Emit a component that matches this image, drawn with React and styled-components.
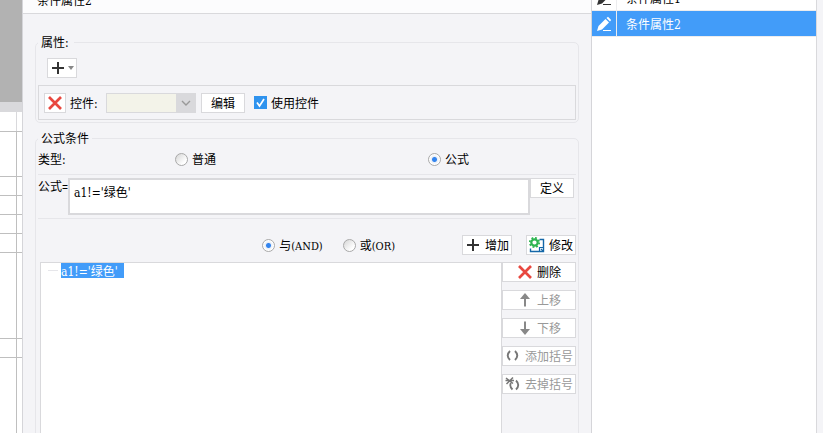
import React, { useState } from 'react'
import styled, { createGlobalStyle } from 'styled-components'

const GlobalStyle = createGlobalStyle`
    * {
        box-sizing: border-box;
    }

    body {
        margin: 0;
        background-color: #f4f4f7;
        color: #000;
    }

    body, button, input, select, textarea {
        font-family: "Noto Sans CJK SC", sans-serif;
        font-size: 12px;
        line-height: 16px;
    }
`;

const Page = styled.div`
    display: flex;
    height: 100vh;
    overflow: hidden;
`;

const Sheet = styled.div`
    display: flex;
    flex-direction: column;
    flex: none;
    width: 22px;
    background-color: #fff;
`;

const SheetTop = styled.div`
    flex: none;
    height: 112px;
    background-color: #b2b2b2;
    border-bottom: 10px solid #d9d9dc;
`;

const SheetRow = styled.div`
    flex: none;
    height: ${props => props.$height}px;
    border-bottom: 1px solid #bfbfbf;
`;

const SheetCell = styled.div`
    width: 17px;
    height: 100%;
    border-right: 1px solid ${props => props.$head ? '#d9d9dc' : '#bfbfbf'};
`;

const Editor = styled.main`
    flex: 1;
    min-width: 0;
    border: 1px solid #d5d5d9;
    border-width: 0 1px;
`;

const EditorTitle = styled.header`
    display: flex;
    align-items: flex-end;
    height: 14px;
    padding: 0 14px 5px;
    overflow: hidden;
    background-color: #fcfcfd;
    border-bottom: 1px solid #d9d9dc;
`;

const EditorBody = styled.div`
    display: flex;
    flex-direction: column;
    gap: 7px;
    padding: 20px 12px 12px;
`;

const Group = styled.fieldset`
    min-width: 0;
    margin: 0;
    padding: 0 2px 2px;
    border: 1px solid #e6e6ea;
    border-radius: 5px;

    legend {
        height: 16px;
        padding: 0 3px;
    }
`;

const Latin = styled.span`
    display: inline-block;
    min-width: 6px;
    font-family: "DejaVu Serif Condensed", "Liberation Serif", serif;
    font-size: ${props => props.$small ? 11 : 12}px;
    line-height: 12px;
`;

/* half-width sign, takes half of a hanzi */
const Sign = styled.span`
    font-family: "Liberation Mono", monospace;
    font-size: 10px;
    line-height: 12px;
`;

const Button = styled.button`
    display: flex;
    flex: none;
    align-items: center;
    justify-content: center;
    gap: 4px;
    width: ${props => props.$width || 44}px;
    height: 20px;
    padding: 0;
    background-color: #fff;
    border: 1px solid #d9d9dc;
    color: #000;
    white-space: nowrap;

    &:disabled {
        color: #999;
    }

    svg {
        flex: none;
    }
`;

const AddRow = styled.div`
    padding: 8px 9px 7px;

    button {
        gap: 2px;
    }
`;

const WidgetRow = styled.div`
    display: flex;
    align-items: center;
    height: 35px;
    padding: 0 5px;
    border: 1px solid #d9d9dc;

    > label {
        margin: 0 6px 0 4px;
    }
`;

const SelectBox = styled.div`
    position: relative;
    width: 90px;
    height: 20px;
    margin-right: 5px;

    select {
        appearance: none;
        width: 100%;
        height: 100%;
        padding: 0 22px 0 4px;
        background-color: #f3f3e9;
        border: 1px solid #d9d9dc;
        border-radius: 0;
    }

    span {
        position: absolute;
        top: 0;
        right: 0;
        display: flex;
        align-items: center;
        justify-content: center;
        width: 20px;
        height: 100%;
        background-color: #d9d9dc;
        pointer-events: none;
    }
`;

const CheckLabel = styled.div`
    display: flex;
    align-items: center;
    gap: 4px;
    margin-left: 9px;

    input {
        appearance: none;
        width: 13px;
        height: 13px;
        margin: 0;
        background-color: #fff;
        border: 1px solid #b4b4b4;
    }

    input:checked {
        border: 0;
        background: #2f93ee url("data:image/svg+xml,%3Csvg xmlns='http://www.w3.org/2000/svg' viewBox='0 0 13 13'%3E%3Cpath d='M3 6.5l2.5 3.5L10 3' fill='none' stroke='white' stroke-width='1.7'/%3E%3C/svg%3E");
    }
`;

const RadioLabel = styled.label`
    display: flex;
    align-items: center;
    gap: 4px;

    input {
        appearance: none;
        width: 13px;
        height: 13px;
        margin: 0;
        border: 1px solid #a9a9a9;
        border-radius: 50%;
        background: linear-gradient(135deg, #d6d6d6, #fff 75%);
    }

    input:checked {
        background: radial-gradient(circle, #3384ee 2px, #e9eef6 3px, #fff 5px);
    }
`;

const TypeRow = styled.div`
    display: grid;
    grid-template-columns: 137fr 253fr 148fr;
    align-items: center;
    height: 29px;
    padding-bottom: 2px;
    border-bottom: 1px solid #e6e6ea;
`;

const FormulaRow = styled.div`
    display: flex;
    align-items: flex-start;
    padding: 3px 2px 3px 0;
    border-bottom: 1px solid #e6e6ea;

    > label {
        flex: none;
        width: 30px;
        white-space: nowrap;
    }

    textarea {
        flex: 1;
        min-width: 0;
        height: 37px;
        padding: 5px 4px;
        border: 2px solid #d9d9dc;
        border-radius: 0;
        font-family: "DejaVu Serif Condensed", "Noto Sans CJK SC", serif;
        resize: none;
    }
`;

const JoinRow = styled.div`
    display: flex;
    align-items: center;
    justify-content: flex-end;
    padding: 16px 0 7px;
`;

const JoinOptions = styled.div`
    display: flex;
    gap: 20px;
    margin-right: 67px;
`;

const JoinButtons = styled.div`
    display: flex;
    gap: 14px;
`;

const Conditions = styled.div`
    display: flex;
    padding-left: 2px;
`;

const Tree = styled.ul`
    flex: 1;
    min-height: 220px;
    margin: 0;
    padding: 0 7px;
    background-color: #fff;
    border: 1px solid #d9d9dc;
    list-style: none;

    li {
        display: flex;
        align-items: center;
        gap: 3px;
    }

    li::before {
        content: "";
        width: 10px;
        border-top: 1px solid #e6e6ea;
    }

    li > span {
        height: 15px;
        padding-right: 3px;
        line-height: 15px;
        background-color: #429cf9;
        color: #fff;
    }
`;

const SideButtons = styled.div`
    display: flex;
    flex-direction: column;
    gap: 8px;
`;

const ItemList = styled.ul`
    flex: none;
    width: 225px;
    margin: 0 6px 0 0;
    padding: 0;
    overflow: hidden;
    background-color: #fff;
    border-right: 1px solid #d9d9dc;
    list-style: none;

    li:first-child {
        margin-top: -15px;
    }
`;

const Item = styled.li`
    display: flex;
    align-items: center;
    height: 26px;
    border-bottom: 1px solid #ececee;
    background-color: ${props => props.$selected ? '#429cf9' : '#fff'};
    color: ${props => props.$selected ? '#fff' : '#333'};

    button {
        display: flex;
        align-items: center;
        justify-content: center;
        width: 25px;
        height: 100%;
        padding: 0;
        background: none;
        border: 0;
        border-right: 1px solid #ececee;
        color: inherit;
    }

    span {
        color: ${props => props.$selected ? '#fff' : '#000'};
    }

    > span {
        padding-left: 9px;
    }
`;

const PlusIcon = () => (
    <svg width="16" height="16" viewBox="0 0 16 16">
        <path d="M2 8h12M8 2v12" stroke="#333" strokeWidth="2" />
    </svg>
)

const CrossIcon = () => (
    <svg width="16" height="16" viewBox="0 0 16 16">
        <path d="M2 2l12 12M14 2L2 14" stroke="#e8473f" strokeWidth="2.7" />
    </svg>
)

const ArrowIcon = ({down}) => (
    <svg width="16" height="16" viewBox="0 0 16 16">
        <g transform={down ? 'rotate(180 8 8)' : undefined} fill="#888">
            <path d="M8 1l5 6H3z" />
            <path d="M7 6h2v8.500H7z" />
        </g>
    </svg>
)

const BracketIcon = ({remove}) => (
    <svg width="16" height="16" viewBox="0 0 16 16" fill="none" stroke="#777">
        {remove ? (
            <>
                <path d="M6 7Q4 10 7.500 13.500M11 4.500Q15.500 9 11 13.500" strokeWidth="1.800" />
                <path d="M1 2l7 5.500M8 1.500l-6.500 6.500M0.500 4.500h8.500" strokeWidth="1.500" />
            </>
        ) : (
            <path d="M5 3Q0.500 7.500 5 12M10 3Q14.500 7.500 10 12" strokeWidth="1.900" />
        )}
    </svg>
)

const ModifyIcon = () => (
    <svg width="16" height="16" viewBox="0 0 16 16" fill="none">
        <path d="M10.500 2.500h4v12h-13v-3" stroke="#1467a8" strokeWidth="1.400" />
        <path d="M10.500 14v-3.500h4M12 12l2 2" stroke="#1467a8" strokeWidth="1.200" />
        <circle cx="5.500" cy="5.500" r="3.200" stroke="#2fb552" strokeWidth="2.200" />
        <circle cx="5.500" cy="5.500" r="4.700" stroke="#2fb552" strokeWidth="1.800" strokeDasharray="1.846" />
    </svg>
)

const PencilIcon = () => (
    <svg width="16" height="16" viewBox="0 0 16 16" fill="currentColor">
        <path d="M1 15L2.500 10L9.500 3l3.500 3.500L6 13.500z" />
        <path d="M10.500 2L12 0.800L15.200 4L14 5.500z" />
        <path d="M7 14h8v1H7z" />
    </svg>
)

const rowHeights = [45, 19, 19, 19, 19, 86, 19]

const items = [1, 2]

const App = () => {
    const [selected, setSelected] = useState(2)
    const [formula, setFormula] = useState("a1!='绿色'")

    return (
        <Page>
            <GlobalStyle />
            <Sheet>
                <SheetTop />
                <SheetRow $height={20}><SheetCell $head /></SheetRow>
                {rowHeights.map((height, index) => (
                    <SheetRow $height={height} key={index}><SheetCell /></SheetRow>
                ))}
                <SheetCell />
            </Sheet>
            <Editor>
                <EditorTitle><span>条件属性<Latin>{selected}</Latin></span></EditorTitle>
                <EditorBody>
                    <Group>
                        <legend>属性<Latin>:</Latin></legend>
                        <AddRow>
                            <Button $width={30} aria-label="添加属性">
                                <PlusIcon />
                                <svg width="6" height="4" viewBox="0 0 6 4"><path d="M0 0h6L3 4z" fill="#888" /></svg>
                            </Button>
                        </AddRow>
                        <WidgetRow>
                            <Button $width={22} aria-label="删除属性"><CrossIcon /></Button>
                            <label htmlFor="widget">控件<Latin>:</Latin></label>
                            <SelectBox>
                                <select id="widget"><option></option></select>
                                <span>
                                    <svg width="10" height="6" viewBox="0 0 10 6"><path d="M1 1l4 4l4-4" fill="none" stroke="#999" strokeWidth="1.4" /></svg>
                                </span>
                            </SelectBox>
                            <Button>编辑</Button>
                            <CheckLabel>
                                <input type="checkbox" id="use-widget" defaultChecked />
                                <label htmlFor="use-widget">使用控件</label>
                            </CheckLabel>
                        </WidgetRow>
                    </Group>
                    <Group>
                        <legend>公式条件</legend>
                        <TypeRow>
                            <div>类型<Latin>:</Latin></div>
                            <RadioLabel><input type="radio" name="type" />普通</RadioLabel>
                            <RadioLabel><input type="radio" name="type" defaultChecked />公式</RadioLabel>
                        </TypeRow>
                        <FormulaRow>
                            <label htmlFor="formula">公式<Sign>=</Sign></label>
                            <textarea id="formula" spellCheck={false} value={formula} onChange={e => setFormula(e.target.value)} />
                            <Button>定义</Button>
                        </FormulaRow>
                        <JoinRow>
                            <JoinOptions>
                                <RadioLabel>
                                    <input type="radio" name="join" defaultChecked />
                                    <span>与<Latin $small>(AND)</Latin></span>
                                </RadioLabel>
                                <RadioLabel>
                                    <input type="radio" name="join" />
                                    <span>或<Latin $small>(OR)</Latin></span>
                                </RadioLabel>
                            </JoinOptions>
                            <JoinButtons>
                                <Button $width={50}><PlusIcon />增加</Button>
                                <Button $width={50}><ModifyIcon />修改</Button>
                            </JoinButtons>
                        </JoinRow>
                        <Conditions>
                            <Tree>
                                <li><span><Latin>a1!='</Latin>绿色<Latin>'</Latin></span></li>
                            </Tree>
                            <SideButtons>
                                <Button $width={74}><CrossIcon />删除</Button>
                                <Button $width={74} disabled><ArrowIcon />上移</Button>
                                <Button $width={74} disabled><ArrowIcon down />下移</Button>
                                <Button $width={74} disabled><BracketIcon />添加括号</Button>
                                <Button $width={74} disabled><BracketIcon remove />去掉括号</Button>
                            </SideButtons>
                        </Conditions>
                    </Group>
                </EditorBody>
            </Editor>
            <ItemList>
                {items.map(item => (
                    <Item key={item} $selected={item === selected} onClick={() => setSelected(item)}>
                        <button aria-label="编辑条件属性"><PencilIcon /></button>
                        <span>条件属性<Latin>{item}</Latin></span>
                    </Item>
                ))}
            </ItemList>
        </Page>
    )
}

export default App
